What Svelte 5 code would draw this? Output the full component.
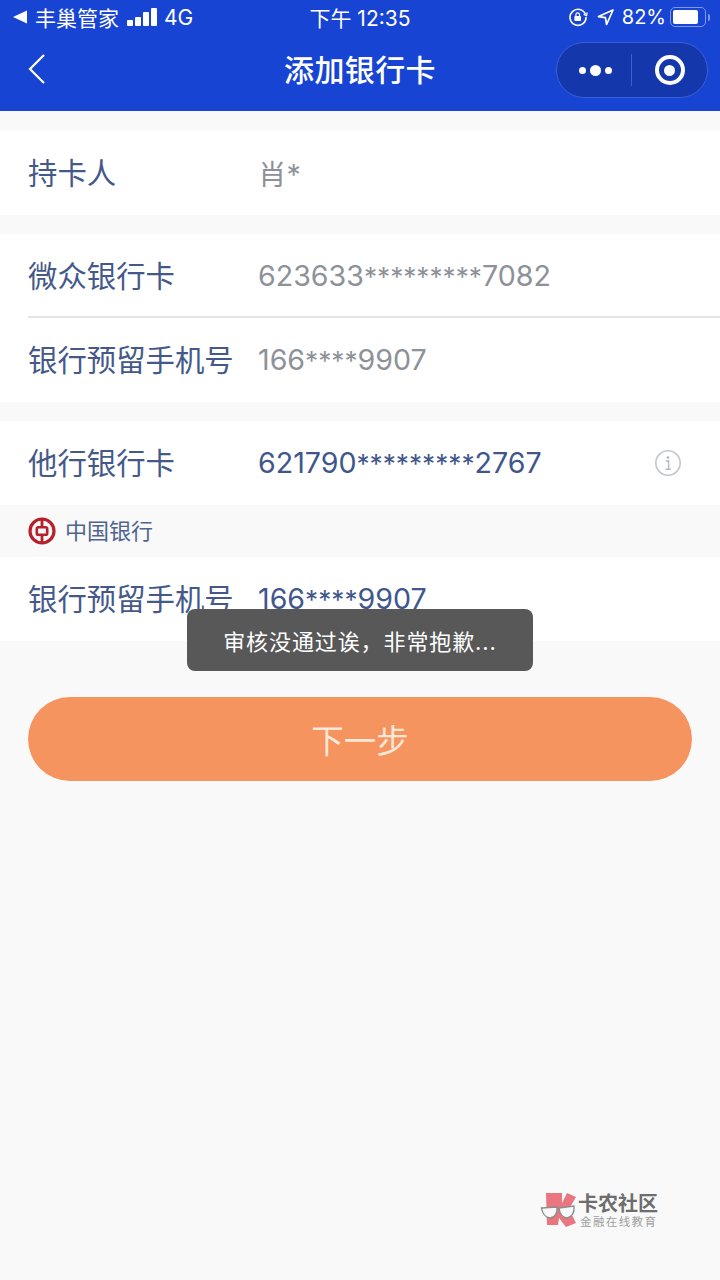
<script>
  const info = [
    { label: "持卡人", value: "肖*", muted: true }
  ];
  const own = [
    { label: "微众银行卡", value: "623633*********7082" },
    { label: "银行预留手机号", value: "166****9907" }
  ];

  // runs of masking stars are set a little smaller than the digits
  const split = (v) => v.split(/(\*{2,})/);
</script>

{#snippet masked(v)}
  {#each split(v) as part}
    {#if part.startsWith("*")}<span class="stars">{part}</span>{:else}{part}{/if}
  {/each}
{/snippet}

<div class="page">
  <header class="top">
    <div class="status">
      <div class="status-left">
        <svg class="back-tri" width="14" height="14" viewBox="0 0 14 14"><path d="M0 7 14 0.5v13z" fill="#fff" /></svg>
        <span class="carrier">丰巢管家</span>
        <span class="bars"><i></i><i></i><i></i><i></i></span>
        <span class="net">4G</span>
      </div>
      <div class="clock">下午 12:35</div>
      <div class="status-right">
        <svg width="20" height="20" viewBox="0 0 20 20" fill="none" stroke="#fff" stroke-width="1.6">
          <path d="M17.5 7.5A8 8 0 1 0 18 10" />
          <path d="M15.6 7.4 18.6 8.6 19.2 5.4" stroke-width="1.2" />
          <rect x="6.4" y="9" width="6.6" height="5" fill="#fff" stroke="none" rx="0.8" />
          <path d="M7.9 9V7.6a1.8 1.8 0 0 1 3.6 0V9" stroke-width="1.2" />
        </svg>
        <svg class="loc" width="17" height="17" viewBox="0 0 17 17" fill="none" stroke="#fff" stroke-width="1.7" stroke-linejoin="round"><path d="M16 1 1.500 7.600 8.400 8.600 9.600 15.500z" /></svg>
        <span class="pct">82%</span>
        <span class="battery"><span class="charge"></span></span>
        <span class="nub"></span>
      </div>
    </div>
    <nav class="bar">
      <svg class="chev" width="20" height="32" viewBox="0 0 20 32" fill="none" stroke="#fff" stroke-width="2.2"><path d="M17 2 3 16l14 14" /></svg>
      <h1>添加银行卡</h1>
      <div class="capsule">
        <div class="dots"><i></i><i class="big"></i><i></i></div>
        <span class="sep"></span>
        <div class="target"><i></i></div>
      </div>
    </nav>
  </header>

  <section class="card">
    {#each info as row}
      <div class="row">
        <span class="label">{row.label}</span>
        <span class="value muted">{row.value}</span>
      </div>
    {/each}
  </section>

  <section class="card">
    {#each own as row, i}
      <div class="row" class:ruled={i === 0}>
        <span class="label">{row.label}</span>
        <span class="value muted">{@render masked(row.value)}</span>
      </div>
    {/each}
  </section>

  <section class="card">
    <div class="row">
      <span class="label">他行银行卡</span>
      <span class="value">{@render masked("621790*********2767")}</span>
      <svg class="info" width="28" height="28" viewBox="0 0 28 28" fill="none">
        <circle cx="14" cy="14" r="12.2" stroke="#c3c6d0" stroke-width="1.6" />
        <circle cx="14" cy="8.6" r="1.3" fill="#b4b7c2" />
        <path d="M11.8 12h2.8v8M11.6 20.2h5.2" stroke="#b4b7c2" stroke-width="1.4" />
      </svg>
    </div>
  </section>

  <div class="bank">
    <!-- ring, inner rounded square, and the two stubs joining them -->
    <svg width="28" height="28" viewBox="0 0 28 28" fill="none" stroke="#b5202a">
      <circle cx="14" cy="14" r="12" stroke-width="3.2" />
      <rect x="8.8" y="10.2" width="10.4" height="7.6" rx="1.6" stroke-width="2.6" />
      <path d="M14 2v8M14 18v8" stroke-width="2.8" />
    </svg>
    <span>中国银行</span>
  </div>

  <section class="card">
    <div class="row">
      <span class="label">银行预留手机号</span>
      <span class="value">{@render masked("166****9907")}</span>
    </div>
  </section>

  <button class="next"><span>下一步</span></button>

  <div class="toast">审核没通过诶，非常抱歉...</div>

  <div class="mark">
    <svg width="38" height="40" viewBox="0 0 38 40">
      <path d="M6 3h16v10l5-10 9 4-7 12 7 14-10 4-7-9-1 7H7z" fill="#ea6f7a" />
      <g fill="#fafafa" stroke="#888" stroke-width="1.4">
        <path d="M1.500 18 17 17q1 10-7 11-7-1-8.500-10z" />
        <path d="M19 18l15-2q1 10-7 12-7-1-8-10z" />
      </g>
    </svg>
    <div class="mark-text">
      <strong>卡农社区</strong>
      <small>金融在线教育</small>
    </div>
  </div>
</div>

<style>
  :global(body) {
    margin: 0;
    background: #f9f9f9;
    font-family: Inter, "Noto Sans CJK SC", sans-serif;
  }
  .page {
    position: relative;
    height: 1280px;
    overflow: hidden;
    background: #f9f9f9;
  }
  .top {
    height: 111px;
    background: #1844d4;
    color: #fff;
    margin-bottom: 20px;
  }
  .status {
    height: 34px;
    display: grid;
    grid-template-columns: 1fr auto 1fr;
    align-items: center;
    padding: 0 10px;
    font-size: 20px;
  }
  .status-left, .status-right {
    display: flex;
    align-items: center;
  }
  .status-right { justify-content: flex-end; }
  .back-tri { margin-left: 3px; }
  .carrier { margin-left: 8px; font-size: 21px; }
  .bars {
    display: flex;
    align-items: flex-end;
    gap: 2px;
    margin-left: 8px;
  }
  .bars i {
    width: 6px;
    background: #fff;
    border-radius: 1px;
  }
  .bars i:nth-child(1) { height: 6px; }
  .bars i:nth-child(2) { height: 9px; }
  .bars i:nth-child(3) { height: 14px; }
  .bars i:nth-child(4) { height: 18px; }
  .net { margin-left: 7px; font-size: 21px; }
  .clock { font-size: 21px; }
  .loc { margin-left: 9px; }
  .pct { margin-left: 8px; font-size: 20px; }
  .battery {
    width: 36px;
    height: 20px;
    margin-left: 4px;
    box-sizing: border-box;
    border: 1.5px solid #7f98e8;
    border-radius: 5px;
    padding: 2px;
    display: flex;
  }
  .charge {
    width: 82%;
    background: #fff;
    border-radius: 2px;
  }
  .nub {
    width: 2px;
    height: 7px;
    margin-left: 2px;
    background: #7f98e8;
    border-radius: 0 2px 2px 0;
  }
  .bar {
    position: relative;
    height: 77px;
    display: flex;
    align-items: center;
    justify-content: center;
  }
  .chev {
    position: absolute;
    left: 27px;
    top: 19px;
  }
  h1 {
    margin: 0 0 9px;
    font-size: 30px;
    font-weight: 500;
    letter-spacing: 0.4px;
  }
  .capsule {
    position: absolute;
    right: 12px;
    top: 8px;
    width: 152px;
    height: 56px;
    box-sizing: border-box;
    display: flex;
    align-items: center;
    background: #1438ab;
    border: 1px solid #3b5fd6;
    border-radius: 28px;
  }
  .dots {
    flex: 1;
    display: flex;
    align-items: center;
    justify-content: center;
    gap: 4px;
    padding-left: 3px;
  }
  .dots i {
    width: 7px;
    height: 7px;
    background: #fff;
    border-radius: 50%;
  }
  .dots i.big { width: 11px; height: 11px; }
  .sep {
    width: 1px;
    height: 32px;
    background: #3b5fd6;
  }
  .target {
    width: 75px;
    display: flex;
    justify-content: center;
  }
  .target i {
    width: 30px;
    height: 30px;
    box-sizing: border-box;
    border: 4px solid #fff;
    border-radius: 50%;
    display: flex;
    align-items: center;
    justify-content: center;
  }
  .target i::after {
    content: "";
    width: 11px;
    height: 11px;
    background: #fff;
    border-radius: 50%;
  }
  .card {
    background: #fff;
    margin-bottom: 19px;
  }
  .row {
    position: relative;
    height: 84px;
    box-sizing: border-box;
    padding: 0 38px 1px 28px;
    display: flex;
    align-items: center;
  }
  .ruled::after {
    content: "";
    position: absolute;
    left: 28px;
    right: 0;
    bottom: 0;
    height: 2px;
    background: #e4e4e6;
  }
  .label {
    width: 230px;
    margin-top: -3px;
    font-size: 29.4px;
    color: #44598a;
    white-space: nowrap;
  }
  .value {
    flex: 1;
    font-size: 28.6px;
    color: #40568c;
    white-space: nowrap;
  }
  .value.muted { color: #8d9198; }
  .stars { font-size: 26.2px; }
  .bank {
    height: 52px;
    margin-top: -19px;
    padding: 0 0 5px 28px;
    box-sizing: border-box;
    display: flex;
    align-items: center;
    gap: 9px;
    font-size: 22px;
    color: #4f648f;
  }
  .bank svg { margin-top: 5px; }
  .next {
    display: block;
    width: 664px;
    height: 84px;
    margin: 56px auto 0;
    padding: 0 0 2px;
    border: 0;
    border-radius: 42px;
    background: #f5945f;
    color: #fde7d8;
    font: 400 32.500px Inter, "Noto Sans CJK SC", sans-serif;
  }
  .toast {
    position: absolute;
    left: 187px;
    top: 609px;
    width: 346px;
    height: 62px;
    display: flex;
    align-items: center;
    justify-content: center;
    border-radius: 8px;
    background: #585858;
    color: #fff;
    font-size: 22px;
    letter-spacing: 0.9px;
  }
  .mark {
    position: absolute;
    left: 540px;
    top: 1190px;
    display: flex;
    align-items: center;
    opacity: 0.95;
  }
  .mark-text {
    display: flex;
    flex-direction: column;
    line-height: 1;
    margin-top: 3px;
  }
  .mark strong {
    font-size: 20px;
    font-weight: 700;
    color: #666;
  }
  .mark small {
    margin-top: 3px;
    font-size: 11.5px;
    letter-spacing: 1.4px;
    color: #9a9a9a;
    padding-left: 2px;
  }
</style>
